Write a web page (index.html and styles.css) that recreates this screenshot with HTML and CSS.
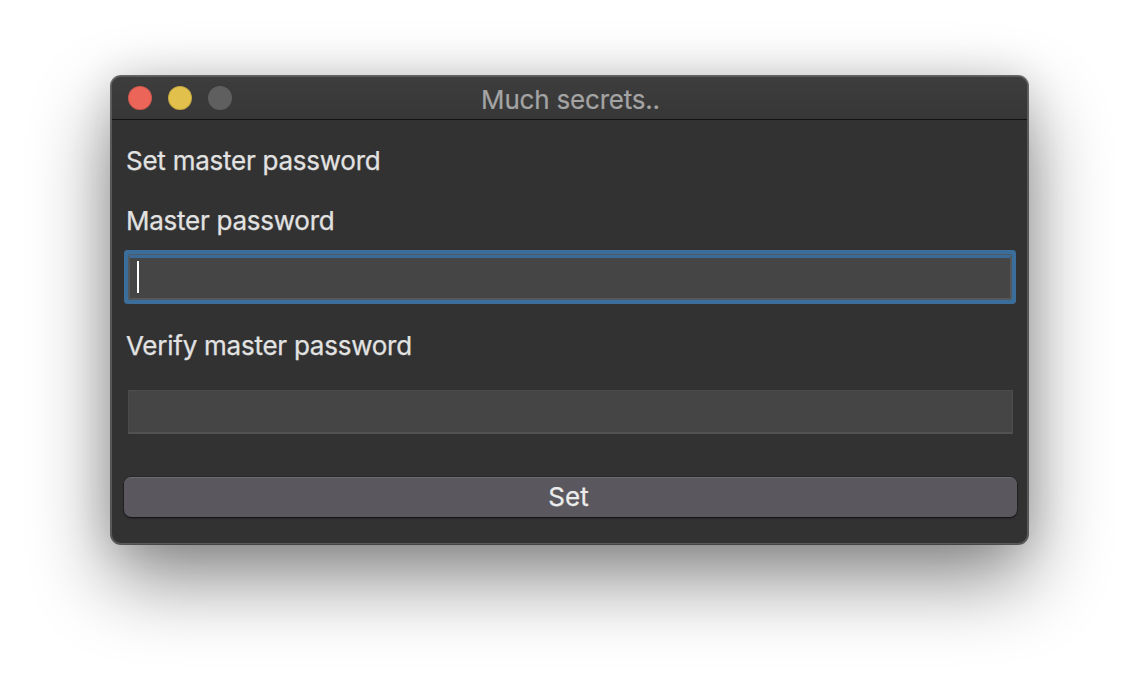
FILE: index.html
```html
<!DOCTYPE html>
<html>
<head>
<meta charset="utf-8">
<link rel="stylesheet" href="styles.css">
</head>
<body>
<div class="window">
  <div class="titlebar">
    <div class="lights">
      <span class="light red"></span>
      <span class="light yellow"></span>
      <span class="light gray"></span>
    </div>
    <div class="title">Much secrets..</div>
  </div>
  <div class="content">
    <div class="label first">Set master password</div>
    <div class="label second">Master password</div>
    <div class="field focused"><span class="caret"></span></div>
    <div class="label third">Verify master password</div>
    <div class="field plain"></div>
    <div class="button">Set</div>
  </div>
</div>
</body>
</html>
```

FILE: styles.css
```css
html, body {
  margin: 0;
  padding: 0;
  background: #ffffff;
}
body {
  width: 1140px;
  height: 692px;
  overflow: hidden;
  font-family: Inter, "Noto Sans", "DejaVu Sans", sans-serif;
}
.window {
  margin: 76px 0 0 111px;
  width: 917px;
  height: 468px;
  box-sizing: border-box;
  background: #323232;
  border-radius: 10px;
  border: 1px solid #5a5a5a;
  box-shadow: 0 0 0 1px rgba(0,0,0,0.55), 0 34px 80px rgba(0,0,0,0.48), 0 0 40px rgba(0,0,0,0.12);
  display: flex;
  flex-direction: column;
  overflow: hidden;
}
.titlebar {
  position: relative;
  height: 42px;
  flex: none;
  background: linear-gradient(#3d3d3d, #373737);
  border-bottom: 1px solid #111111;
  display: flex;
  align-items: center;
  justify-content: center;
}
.lights {
  position: absolute;
  left: 16px;
  top: 9px;
  display: flex;
  gap: 16px;
}
.light {
  width: 24px;
  height: 24px;
  border-radius: 50%;
  display: block;
}
.red { background: #ec6559; box-shadow: inset 0 0 0 1px rgba(0,0,0,0.12); }
.yellow { background: #e1c04b; box-shadow: inset 0 0 0 1px rgba(0,0,0,0.12); }
.gray { background: #5f5f5f; }
.title {
  color: #a4a4a4;
  font-size: 26px;
  line-height: 32px;
  margin-top: 3px;
  margin-left: 2px;
  letter-spacing: -0.2px;
  -webkit-text-stroke: 0.2px #a4a4a4;
}
.content {
  padding: 25px 10px 0 11px;
  display: flex;
  flex-direction: column;
}
.label {
  color: #e2e2e2;
  font-size: 26px;
  line-height: 32px;
  padding-left: 3px;
  letter-spacing: -0.25px;
  -webkit-text-stroke: 0.25px #e2e2e2;
}
.second { margin-top: 28px; }
.third { margin-top: 31px; }
.field {
  box-sizing: border-box;
  height: 44px;
  background: #454545;
}
.focused {
  margin: 18px 6px 0 6px;
  border: 1px solid #575757;
  border-top: 3px solid #3a6b98;
  border-radius: 1px;
  box-shadow: 0 0 0 1px #4f5961, 0 0 0 5px #3c6e9b;
  display: flex;
  align-items: center;
  padding-left: 7px;
}
.caret {
  width: 2px;
  height: 32px;
  background: #ffffff;
  margin-top: -2px;
}
.plain {
  margin: 28px 4px 0 5px;
  height: 44px;
  border: 1px solid #4c4c4c;
  border-bottom: 2px solid #525252;
}
.button {
  margin: 43px 0 0 1px;
  height: 40px;
  box-sizing: border-box;
  background: #5a585e;
  border-top: 1px solid #6d6c71;
  border-radius: 7px;
  box-shadow: 0 1px 2px rgba(0,0,0,0.6), 0 0 0 0.5px rgba(0,0,0,0.4);
  color: #ececec;
  font-size: 26px;
  line-height: 38px;
  text-align: center;
  padding-right: 4px;
  -webkit-text-stroke: 0.25px #ececec;
}
```
